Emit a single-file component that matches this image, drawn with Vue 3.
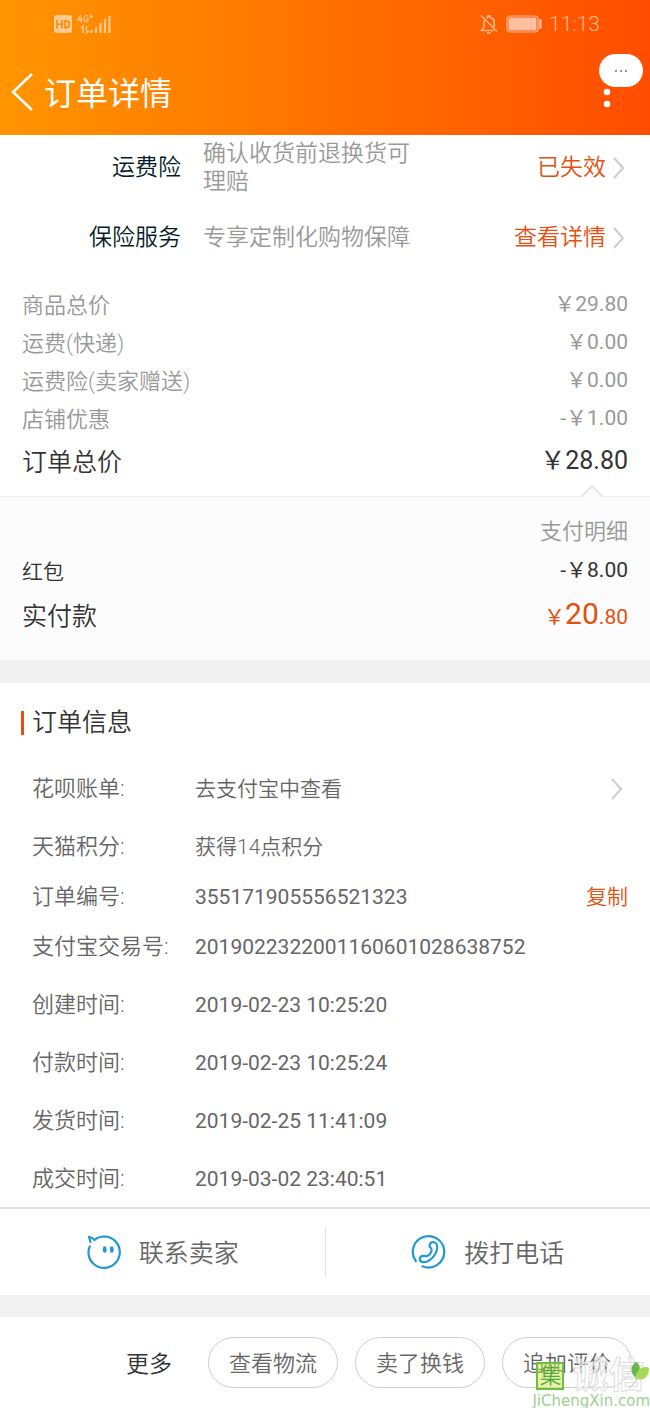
<script setup>
const services = [
  { name: '运费险', text: '确认收货前退换货可理赔', action: '已失效' },
  { name: '保险服务', text: '专享定制化购物保障', action: '查看详情' },
]

const fees = [
  { name: '商品总价', value: '￥29.80' },
  { name: '运费(快递)', value: '￥0.00' },
  { name: '运费险(卖家赠送)', value: '￥0.00' },
  { name: '店铺优惠', value: '-￥1.00' },
]

const info = [
  { name: '花呗账单:', value: '去支付宝中查看', link: true },
  { name: '天猫积分:', value: '获得14点积分', tight: true },
  { name: '订单编号:', value: '355171905556521323', copy: true, tight: true, numeric: true },
  { name: '支付宝交易号:', value: '2019022322001160601028638752', numeric: true },
  { name: '创建时间:', value: '2019-02-23 10:25:20', numeric: true },
  { name: '付款时间:', value: '2019-02-23 10:25:24', numeric: true },
  { name: '发货时间:', value: '2019-02-25 11:41:09', numeric: true },
  { name: '成交时间:', value: '2019-03-02 23:40:51', numeric: true },
]

const actions = ['查看物流', '卖了换钱', '追加评价']
</script>

<template>
  <div class="page">
    <header class="header">
      <div class="status">
        <svg class="signal" width="60" height="22" viewBox="0 0 60 22" aria-hidden="true">
          <rect x="1" y="2" width="18" height="18" rx="3" fill="#ffcb90" />
          <path d="M4 7v8.500M9 7v8.500M4 11.200h5M12 7.800v7h1.500q3-.3 3-3.500t-3-3.500z" fill="none" stroke="#ff8a00" stroke-width="1.600" />
          <path d="M28 2l-3.500 5h5M28 4.500V9.500M35 3.500q-1-1.500-2.500-1T31 5.800t1.500 3 2.500-.8V6h-2M36.500 3.500h3.500M38.200 1.800v3.500" fill="none" stroke="#ffc88f" stroke-width="1.300" />
          <path d="M28 15l2-2v7M33.500 13v7l2.500-2" fill="none" stroke="#ffc88f" stroke-width="1.500" />
          <path d="M38.500 20v-3M43 20v-6M47.500 20v-10M52 20V6M56.500 20V3" fill="none" stroke="#ffc88f" stroke-width="2.200" />
        </svg>
        <div class="status-right">
          <svg width="20" height="22" viewBox="0 0 20 22" aria-hidden="true">
            <path d="M2 2.500l16 16M5.500 7.500Q4.800 9 4.800 11v3.500L2.500 17.500H15M7.500 5Q8.300 4.300 9 4.200V2.800h2v1.400q4.300 1 4.300 6.300v3.500M8 19.800h4" fill="none" stroke="#ffb585" stroke-width="1.700" />
          </svg>
          <svg width="36" height="18" viewBox="0 0 36 18" aria-hidden="true">
            <rect x="1" y="1" width="31" height="16" rx="3" fill="none" stroke="#ffb793" stroke-width="1.200" />
            <rect x="2.500" y="2.500" width="28" height="13" rx="1.500" fill="#ffc0a2" />
            <rect x="33" y="4" width="2.500" height="10" rx="1.200" fill="#ffb793" />
          </svg>
          <span class="clock">11:13</span>
        </div>
      </div>
      <div class="nav">
        <button class="back" type="button" aria-label="返回">
          <svg width="24" height="40" viewBox="0 0 24 40"><path d="M21 2L2 20l19 18" fill="none" stroke="#fff" stroke-width="2.500" /></svg>
        </button>
        <h1>订单详情</h1>
        <button class="more" type="button" aria-label="更多选项">
          <svg width="8" height="36" viewBox="0 0 8 36"><circle cx="4" cy="6" r="3.300" /><circle cx="4" cy="18" r="3.300" /><circle cx="4" cy="30" r="3.300" /></svg>
          <span class="bubble">
            <svg width="14" height="4" viewBox="0 0 14 4"><circle cx="2" cy="2" r="1" /><circle cx="7" cy="2" r="1" /><circle cx="12" cy="2" r="1" /></svg>
          </span>
        </button>
      </div>
    </header>

    <main>
      <section class="services">
        <div v-for="s in services" :key="s.name" class="service">
          <span class="service-name">{{ s.name }}</span>
          <p>{{ s.text }}</p>
          <a href="#" class="service-link">{{ s.action }}
            <svg class="chevron" width="14" height="22" viewBox="0 0 14 22"><path d="M2 1l9 10L2 21" /></svg>
          </a>
        </div>
      </section>

      <dl class="fees">
        <div v-for="f in fees" :key="f.name" class="fee">
          <dt>{{ f.name }}</dt><dd>{{ f.value }}</dd>
        </div>
        <div class="fee total"><dt>订单总价</dt><dd>￥28.80</dd></div>
      </dl>

      <section class="payment">
        <svg class="notch" width="26" height="14" viewBox="0 0 26 14" aria-hidden="true"><path d="M2 13L13 2l11 11" fill="#fcfcfc" stroke="#e2e2e2" stroke-width="1.500" /></svg>
        <h2>支付明细</h2>
        <dl>
          <div class="pay"><dt>红包</dt><dd>-￥8.00</dd></div>
          <div class="pay paid"><dt>实付款</dt><dd>￥<strong>20</strong>.80</dd></div>
        </dl>
      </section>

      <section class="info">
        <h2>订单信息</h2>
        <dl>
          <div v-for="i in info" :key="i.name" class="row" :class="{ tight: i.tight }">
            <dt>{{ i.name }}</dt>
            <dd :class="{ numeric: i.numeric }">
              <a v-if="i.link" href="#" class="bill">{{ i.value }}
                <svg class="chevron" width="14" height="22" viewBox="0 0 14 22"><path d="M2 1l9 10L2 21" /></svg>
              </a>
              <template v-else>{{ i.value }}</template>
              <button v-if="i.copy" type="button" class="copy">复制</button>
            </dd>
          </div>
        </dl>
      </section>

      <div class="contact">
        <button type="button">
          <svg width="36" height="36" viewBox="0 0 36 36" aria-hidden="true">
            <path d="M3.800 12.500Q2 16 2.500 20A15.700 15.700 0 1 0 18.500 2.500Q12.500 2.500 8.500 6 6 3.500 3 2.800L4.500 8" />
            <path d="M18.700 14v3M25.800 14v3" stroke-width="3.600" />
          </svg>
          <span>联系卖家</span>
        </button>
        <button type="button">
          <svg width="36" height="36" viewBox="0 0 36 36" aria-hidden="true">
            <path d="M4.800 27A15.700 15.700 0 1 1 11.500 32.300" />
            <path d="M18.500 11.500q.5-3.500 3.800-3.500 4 .5 3.900 5.500-.5 6-5 10.500-4.800 4.500-9.200 4.200-3.300-.6-3.200-3.400.4-2.800 3.500-2.900 2.200.4 3.500.3 1.800-.6 3.400-2.500 1.500-2.200 1.400-4-.1-1.500-1.600-2.500-.7-.8-.5-1.700z" />
          </svg>
          <span>拨打电话</span>
        </button>
      </div>
    </main>

    <footer class="footer">
      <button type="button" class="more-text">更多</button>
      <button v-for="a in actions" :key="a" type="button" class="pill">{{ a }}</button>
      <div class="mark">
        <div class="mark-top">
          <span class="seal">集</span>
          <span class="outline">诚信</span>
          <svg class="leaf" width="22" height="30" viewBox="0 0 22 30" aria-hidden="true">
            <path d="M7 17Q2 12 4 7q2-5 5-5 4 4 2 10-1 3-4 5z" fill="#67b852" />
            <path d="M7 18Q9 10 13 8q5-2 8 0 0 9-6 11-5 1-8-1z" fill="#a4d957" />
            <path d="M10 17Q7 24 1 28" fill="none" stroke="#a8d68d" />
          </svg>
        </div>
        <span class="site">JiChengXin.com</span>
      </div>
    </footer>
  </div>
</template>

<style>
body {
  margin: 0;
  background: #fff;
}
</style>

<style scoped>
.page {
  font-family: Roboto, "Noto Sans CJK SC", sans-serif;
  font-weight: 350;
  font-size: 21px;
  line-height: 28px;
  color: #666;
  background: #fff;
}

h1, h2, p, dl, dt, dd {
  margin: 0;
  font-weight: inherit;
}

button {
  padding: 0;
  border: 0;
  background: none;
  font: inherit;
  color: inherit;
  cursor: pointer;
}

a {
  color: inherit;
  text-decoration: none;
}

.header {
  box-sizing: border-box;
  height: 135px;
  background: linear-gradient(90deg, #ff9500, #ff4d00);
  color: #fff;
}

.status {
  display: flex;
  justify-content: space-between;
  align-items: center;
  height: 48px;
  padding: 0 50px 0 53px;
}

.status-right {
  display: flex;
  align-items: center;
  gap: 7px;
}

.clock {
  font-size: 21px;
  color: #ffb98c;
}

.nav {
  display: flex;
  align-items: center;
  height: 88px;
  padding: 0 39px 0 11px;
}

.back {
  display: flex;
}

h1 {
  flex: 1;
  margin-left: 9px;
  padding-top: 4px;
  font-size: 32px;
  line-height: 40px;
  font-weight: 400;
}

.more {
  position: relative;
  display: flex;
}

.more > svg {
  fill: #fff;
}

.bubble {
  position: absolute;
  left: -4px;
  top: -20px;
  display: flex;
  align-items: center;
  justify-content: center;
  width: 44px;
  height: 33px;
  border-radius: 17px;
  background: #fff;
}

.bubble svg {
  fill: #777;
}

.chevron {
  flex: none;
  fill: none;
  stroke: #ccc;
  stroke-width: 2;
}

.services {
  padding-top: 5px;
  font-size: 23px;
}

.service {
  display: flex;
  align-items: center;
  min-height: 56px;
  margin-bottom: 14px;
  padding-right: 24px;
}

.service-name {
  width: 181px;
  margin-right: 22px;
  text-align: right;
  color: #051b28;
}

.service p {
  width: 214px;
  color: #999;
}

.service-link {
  display: flex;
  align-items: center;
  gap: 6px;
  margin-left: auto;
  color: #e4500f;
}

.fees {
  padding: 7px 22px 9px;
  color: #999;
}

.fee, .pay {
  display: flex;
  justify-content: space-between;
  align-items: center;
}

.fee {
  min-height: 38px;
}

.fee dt {
  font-size: 22px;
}

.fee dd, .pay dd {
  padding-bottom: 4px;
  font-weight: 400;
}

.total {
  min-height: 48px;
  color: #333;
}

.total dt, .total dd {
  font-size: 25px;
}

.payment {
  position: relative;
  padding: 21px 22px 20px;
  border-top: 1px solid #eee;
  background: #fcfcfc;
  color: #333;
}

.notch {
  position: absolute;
  right: 45px;
  top: -13px;
}

.payment h2 {
  font-size: 22px;
  text-align: right;
  color: #999;
}

.pay {
  min-height: 44px;
}

.pay + .pay {
  min-height: 46px;
}

.payment dl {
  padding-top: 4px;
}

.paid dt {
  font-size: 25px;
}

.paid dd {
  color: #e4500f;
}

.paid strong {
  font-size: 30px;
  font-weight: 400;
}

.info {
  padding: 28px 22px 0 21px;
  border-top: 23px solid #f1f1f1;
}

.info h2 {
  padding-left: 8px;
  border-left: 3px solid #e4500f;
  font-size: 25px;
  line-height: 24px;
  color: #333;
}

.info dl {
  padding: 40px 0 0 11px;
}

.row {
  display: flex;
  align-items: flex-start;
  min-height: 58px;
}

.tight {
  min-height: 50px;
}

.row:last-child {
  min-height: 42px;
}

.row dt {
  width: 163px;
  font-size: 22px;
}

.row dd {
  flex: 1;
  display: flex;
  justify-content: space-between;
}

.row .numeric {
  font-weight: 400;
}

.bill {
  flex: 1;
  display: flex;
  justify-content: space-between;
  align-items: center;
  padding-right: 4px;
}

.copy {
  color: #e4500f;
  font-weight: 350;
}

.contact {
  display: flex;
  padding: 18px 0;
  border-top: 2px solid #e2e2e2;
  border-bottom: 22px solid #f2f2f2;
}

.contact button {
  flex: 1;
  display: flex;
  align-items: center;
  justify-content: center;
  gap: 17px;
  height: 50px;
  font-size: 25px;
}

.contact button + button {
  border-left: 1px solid #e5e5e5;
}

.contact span {
  padding-top: 4px;
}

.contact svg {
  fill: none;
  stroke: #2199d2;
  stroke-width: 2.2;
  stroke-linecap: round;
  stroke-linejoin: round;
}

.footer {
  position: relative;
  display: flex;
  justify-content: flex-end;
  align-items: center;
  gap: 17px;
  padding: 20px 18px;
}

.more-text {
  margin-right: 19px;
  padding-top: 4px;
  font-size: 23px;
  color: #333;
}

.pill {
  box-sizing: border-box;
  width: 130px;
  height: 51px;
  padding-top: 3px;
  border: 1px solid #ccc;
  border-radius: 26px;
  font-size: 22px;
}

.mark {
  position: absolute;
  right: 0;
  bottom: 0;
  pointer-events: none;
}

.mark-top {
  display: flex;
  align-items: center;
  gap: 8px;
  padding-left: 4px;
}

.seal {
  box-sizing: border-box;
  width: 28px;
  height: 28px;
  border: 2px solid #6ebd42;
  background: rgba(205, 233, 80, 0.5);
  font-size: 22px;
  line-height: 24px;
  text-align: center;
  color: #55a941;
}

.outline {
  font-size: 36px;
  line-height: 36px;
  font-weight: 700;
  color: rgba(255, 255, 255, 0.5);
  -webkit-text-stroke: 1px #ddd;
}

.leaf {
  position: absolute;
  right: 0;
  top: 2px;
}

.site {
  display: block;
  font-family: "DejaVu Sans", sans-serif;
  font-size: 15px;
  font-weight: 400;
  line-height: 14px;
  color: #a0cf90;
}
</style>
